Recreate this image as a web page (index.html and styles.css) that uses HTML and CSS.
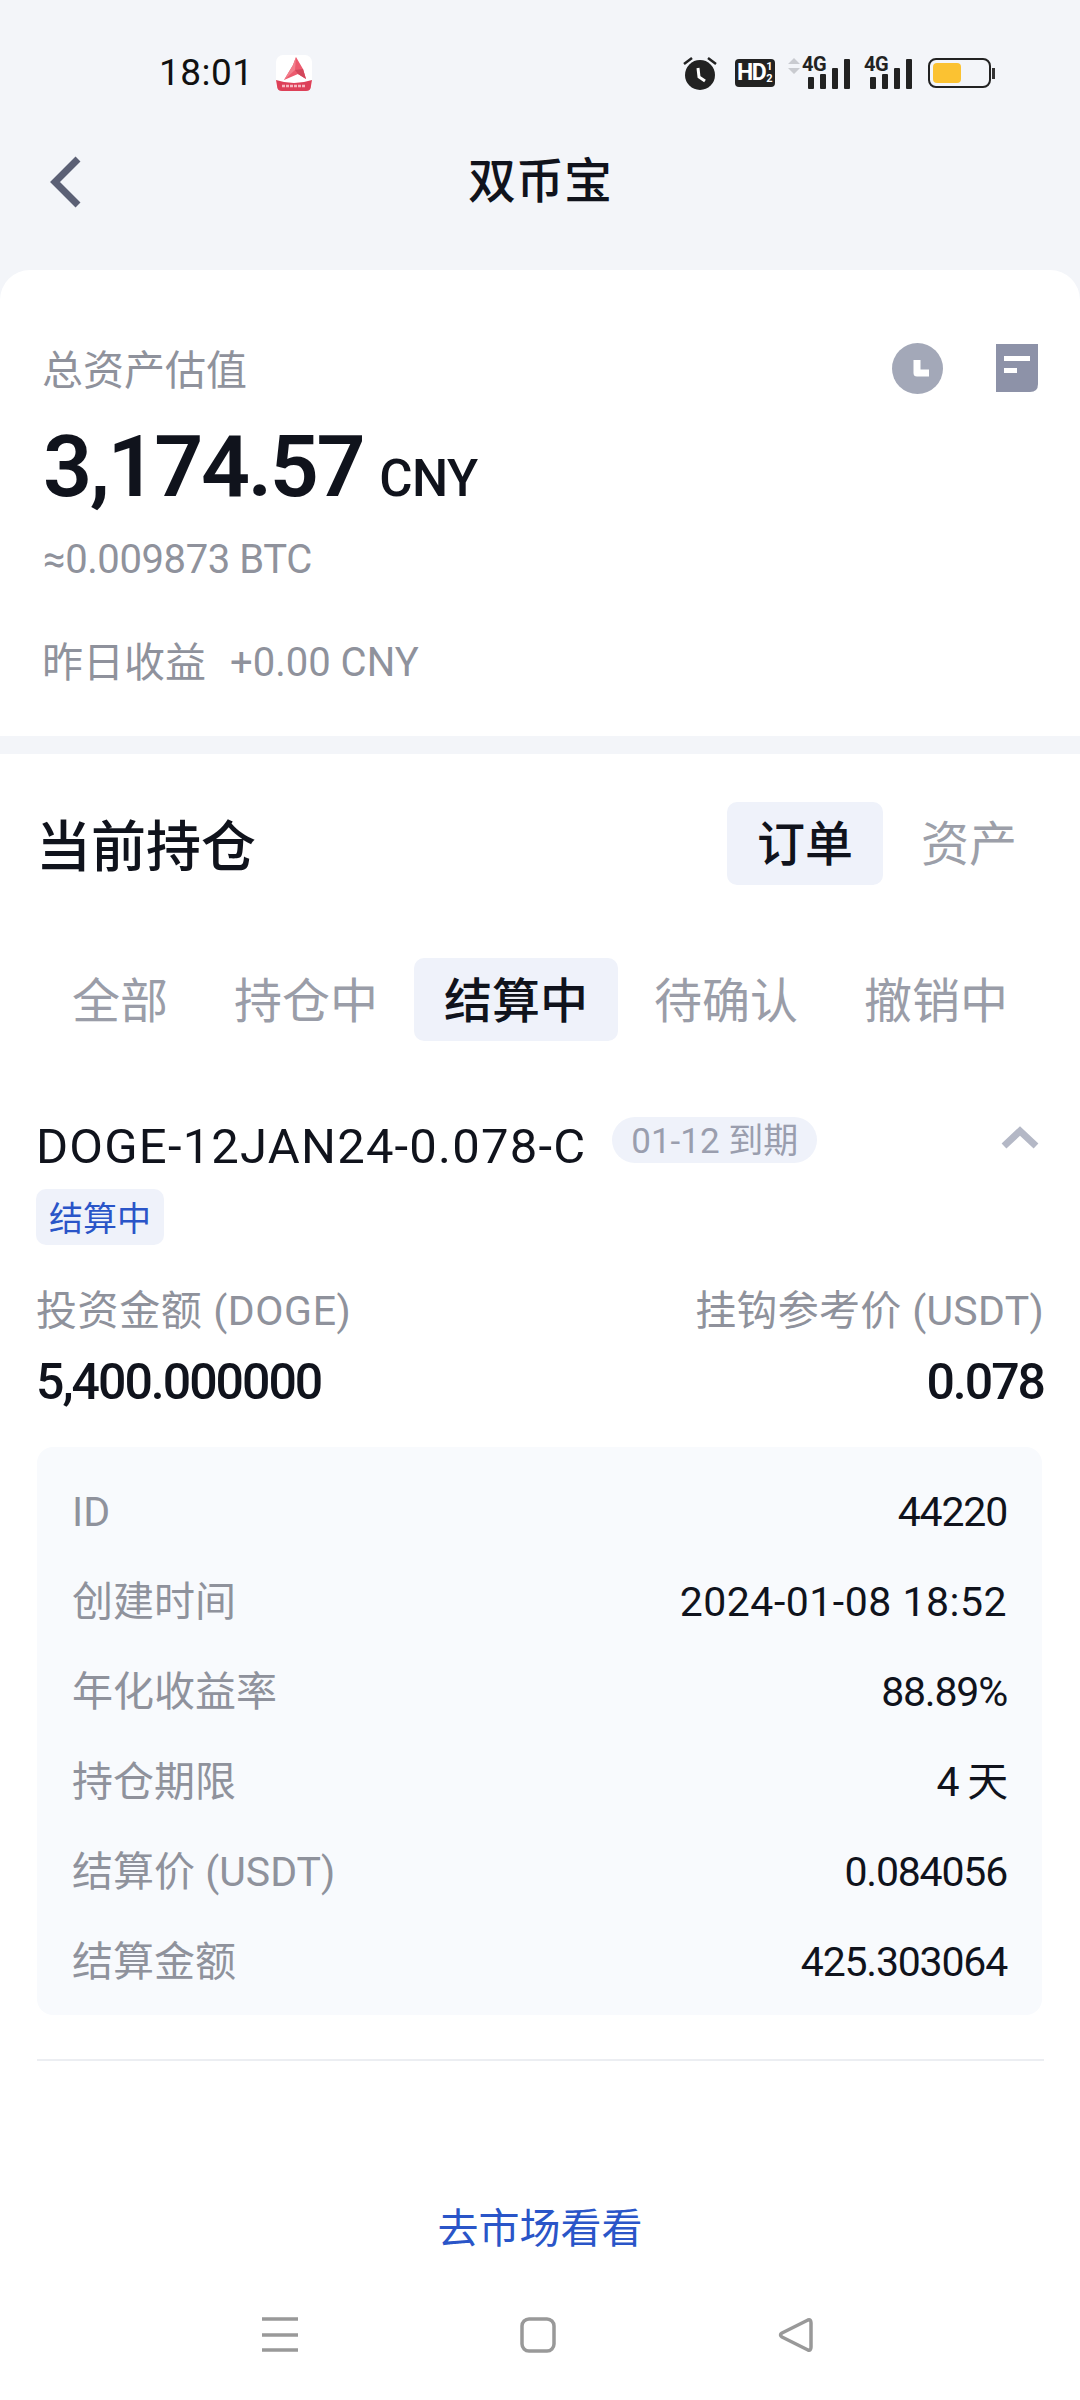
FILE: index.html
```html
<!DOCTYPE html>
<html lang="zh-CN">
<head>
<meta charset="utf-8">
<title>双币宝</title>
<link rel="stylesheet" href="styles.css">
</head>
<body>
<div class="page">
  <div class="statusbar">
    <span class="time">18:01</span>
    <svg class="app-icon" width="36" height="36" viewBox="0 0 36 36">
      <rect width="36" height="36" rx="7" fill="#fff"/>
      <path d="M20 2 L27 14 L30 24 L22 19 L8 25 L17 10 Z" fill="#ec5a6e"/>
      <path d="M20 2 L17 10 L8 25 L19 15 Z" fill="#f27f8c"/>
      <path d="M19 15 L27 14 L30 24 L22 19 Z" fill="#d2475b"/>
      <path d="M0 25 Q18 31 36 25 L35 31 Q35 36 30 36 L6 36 Q1 36 1 31 Z" fill="#dd4058"/>
      <path d="M6 31 H30" stroke="#f6b6bf" stroke-width="2.5" stroke-dasharray="3 1"/>
    </svg>
    <span class="status-right">
      <svg width="34" height="34" viewBox="0 0 34 34"><circle cx="17" cy="19" r="15" fill="#222"/><path d="M1 8 L9 2 M33 8 L25 2" stroke="#222" stroke-width="2.5"/><path d="M15 12 L16 21 L22 25" stroke="#fff" stroke-width="3" fill="none"/></svg>
      <span class="hd">HD<span class="hd-sub"><span>1</span><span>2</span></span></span>
      <span class="signal">
        <svg class="arrows" width="12" height="16" viewBox="0 0 12 16"><path d="M6 0 L12 6 L0 6 Z M6 16 L12 10 L0 10 Z" fill="#c9cbd0"/></svg>
        <span class="net">4G</span>
        <span class="bars"><i class="b1"></i><i class="b2"></i><i class="b3"></i><i class="b4"></i></span>
      </span>
      <span class="signal plain">
        <span class="net">4G</span>
        <span class="bars"><i class="b1"></i><i class="b2"></i><i class="b3"></i><i class="b4"></i></span>
      </span>
      <span class="battery"><span class="battery-fill"></span></span><span class="battery-nub"></span>
    </span>
  </div>

  <div class="navbar">
    <svg class="back" width="31" height="52" viewBox="0 0 31 52"><path d="M28 3 L5 26 L28 49" fill="none" stroke="#5b6075" stroke-width="7"/></svg>
    <div class="title">双币宝</div>
    <span></span>
  </div>

  <section class="summary">
    <div class="summary-head">
      <span class="muted head-label">总资产估值</span>
      <span class="summary-icons">
        <svg width="51" height="51" viewBox="0 0 51 51"><circle cx="25.5" cy="25.5" r="25.5" fill="#a3a8b8"/><path d="M25 17 V30 H37" fill="none" stroke="#fff" stroke-width="7" stroke-linejoin="round"/></svg>
        <svg width="42" height="48" viewBox="0 0 42 48"><path d="M0 0 H42 V40 Q42 48 34 48 H0 Z" fill="#8d92a8"/><rect x="8" y="12" width="26" height="5" fill="#fff"/><rect x="8" y="24" width="13" height="5" fill="#fff"/></svg>
      </span>
    </div>
    <div class="amount"><span class="amount-num">3,174.57</span><span class="amount-unit">CNY</span></div>
    <div class="muted approx">≈0.009873 BTC</div>
    <div class="muted yesterday"><span class="yesterday-label">昨日收益</span><span class="yesterday-value">+0.00 CNY</span></div>
  </section>

  <section class="holdings">
    <div class="holdings-head">
      <h2 class="holdings-title">当前持仓</h2>
      <div class="seg">
        <span class="seg-item active">订单</span>
        <span class="seg-item">资产</span>
      </div>
    </div>
    <div class="filters">
      <span class="filter">全部</span>
      <span class="filter">持仓中</span>
      <span class="filter active">结算中</span>
      <span class="filter">待确认</span>
      <span class="filter">撤销中</span>
    </div>

    <div class="order-head">
      <span class="order-name">DOGE-12JAN24-0.078-C</span>
      <span class="chip">01-12 到期</span>
      <svg class="chevron" width="38" height="23" viewBox="0 0 38 23"><path d="M3 20 L19 5 L35 20" fill="none" stroke="#b4b8c6" stroke-width="7"/></svg>
    </div>
    <span class="tag">结算中</span>

    <div class="figures">
      <div class="figure"><span class="muted">投资金额 (DOGE)</span><span class="figure-value">5,400.000000</span></div>
      <div class="figure right"><span class="muted">挂钩参考价 (USDT)</span><span class="figure-value">0.078</span></div>
    </div>

    <div class="details">
      <div class="row"><span class="muted">ID</span><span>44220</span></div>
      <div class="row"><span class="muted">创建时间</span><span class="date">2024-01-08 18:52</span></div>
      <div class="row"><span class="muted">年化收益率</span><span>88.89%</span></div>
      <div class="row"><span class="muted">持仓期限</span><span>4 天</span></div>
      <div class="row"><span class="muted">结算价 (USDT)</span><span>0.084056</span></div>
      <div class="row"><span class="muted">结算金额</span><span>425.303064</span></div>
    </div>
    <div class="divider"></div>
    <a class="market-link">去市场看看</a>
    <div class="sysnav">
      <svg width="36" height="36" viewBox="0 0 36 36"><path d="M0 2 H36 M0 18 H36 M0 33 H36" stroke="#999" stroke-width="3.5"/></svg>
      <svg width="36" height="36" viewBox="0 0 36 36"><rect x="2" y="2" width="32" height="32" rx="7" fill="none" stroke="#999" stroke-width="3.5"/></svg>
      <svg width="36" height="36" viewBox="0 0 36 36"><path d="M30 3 Q33 2 33 6 V30 Q33 34 30 33 L4 20 Q1 18 4 16 Z" fill="none" stroke="#999" stroke-width="3.5" stroke-linejoin="round"/></svg>
    </div>
  </section>
</div>
</body>
</html>
```

FILE: styles.css
```css
* { box-sizing: border-box; }
html, body { margin: 0; padding: 0; }
body {
  background: #f3f5f9;
  font-family: Roboto, "Noto Sans CJK SC", sans-serif;
  color: #10131c;
}
.page { width: 1080px; height: 2400px; overflow: hidden; display: flex; flex-direction: column; }

.statusbar { height: 146px; display: flex; align-items: center; padding-left: 159px; flex: none; }
.time { font-size: 37px; letter-spacing: 0.5px; color: #111; line-height: 40px; width: 117px; }
.app-icon { display: block; }
.status-right { margin-left: auto; margin-right: 85px; display: flex; align-items: center; }
.hd { margin-left: 18px; width: 40px; height: 28px; background: #222; color: #fff; border-radius: 4px; font: 700 23px/28px Roboto, sans-serif; display: flex; padding-left: 2px; letter-spacing: -1.5px; overflow: hidden; }
.hd-sub { display: flex; flex-direction: column; font-size: 11px; line-height: 12px; margin-left: 1px; padding-top: 2px; letter-spacing: 0; }
.signal { display: flex; position: relative; width: 62px; height: 32px; margin-left: 13px; align-items: flex-end; justify-content: flex-end; }
.signal.plain { margin-left: 16px; width: 46px; }
.arrows { position: absolute; left: 0; top: 1px; }
.net { position: absolute; left: 14px; top: -3px; font: 700 20px/20px Roboto, sans-serif; color: #222; letter-spacing: -0.5px; }
.signal.plain .net { left: -2px; }
.bars { display: flex; align-items: flex-end; gap: 6px; height: 30px; }
.bars i { display: block; width: 6px; background: #222; border-radius: 1px; }
.bars .b1 { height: 12px; }
.bars .b2 { height: 15px; }
.bars .b3 { height: 21px; }
.bars .b4 { height: 30px; }
.battery { margin-left: 16px; width: 63px; height: 30px; border: 2.5px solid #222; border-radius: 8px; padding: 3px; display: block; }
.battery-fill { display: block; width: 28px; height: 100%; background: #fbc232; border-radius: 4px; }
.battery-nub { margin-left: 1px; width: 3px; height: 11px; background: #333; }

.navbar { height: 72px; margin-bottom: 52px; flex: none; display: grid; grid-template-columns: 1fr auto 1fr; align-items: center; padding-left: 50px; padding-right: 50px; }
.back { display: block; }
.title { font-size: 48px; line-height: 72px; font-weight: 500; color: #10131c; }

.muted { color: #8f929c; }
.summary { flex: none; background: #fff; border-radius: 30px 30px 0 0; height: 466px; padding: 72px 43px 0 43px; font-size: 41px; }
.summary-head { display: flex; justify-content: space-between; align-items: center; height: 52px; line-height: 52px; }
.head-label { padding-top: 5px; margin-left: -1px; }
.summary-icons { display: flex; align-items: center; gap: 53px; margin-right: -1px; }
.summary-icons svg { display: block; }
.amount { margin-top: 23px; height: 100px; display: flex; align-items: baseline; line-height: 100px; }
.amount-num { font-size: 86px; font-weight: 600; letter-spacing: -2.4px; color: #10131c; margin-right: 3px; }
.amount-unit { font-size: 51px; font-weight: 500; margin-left: 13px; letter-spacing: -0.5px; }
.approx { margin-top: 18px; line-height: 50px; font-size: 40px; letter-spacing: -0.4px; }
.yesterday { margin-top: 52px; line-height: 52px; display: flex; gap: 24px; margin-left: -1px; }
.yesterday-value { font-size: 40px; letter-spacing: 0; }

.holdings { flex: none; margin-top: 18px; background: #fff; height: 1646px; display: flex; flex-direction: column; }
.holdings-head { margin-top: 48px; height: 83px; display: flex; justify-content: space-between; align-items: center; padding: 0 33px 0 36px; }
.holdings-title { margin: 0; font-size: 55px; font-weight: 500; line-height: 83px; padding-top: 7px; color: #10131c; }
.seg { display: flex; gap: 8px; }
.seg-item { padding: 2px 30px 0; font-size: 48px; line-height: 81px; height: 83px; color: #9c9fa9; border-radius: 10px; }
.seg-item.active { background: #eff2fa; color: #10131c; font-weight: 500; }
.filters { margin-top: 73px; height: 83px; display: flex; gap: 6px; padding-left: 42px; }
.filter { padding: 4px 30px 0; font-size: 48px; line-height: 79px; height: 83px; color: #9a9da8; border-radius: 10px; }
.filter.active { background: #eff2fa; color: #10131c; font-weight: 500; }

.order-head { margin-top: 76px; height: 60px; display: flex; align-items: flex-start; padding: 0 41px 0 36px; }
.order-name { font-size: 49px; line-height: 60px; letter-spacing: 1.2px; color: #10131c; }
.chip { margin-left: 26px; height: 46px; border-radius: 23px; background: #eff2fa; color: #9a9eae; font-size: 35px; line-height: 49px; padding: 0 19px; }
.chevron { margin-left: auto; margin-top: 9px; display: block; }
.tag { margin: 12px 0 0 36px; align-self: flex-start; height: 56px; line-height: 60px; padding: 0 13px; background: #eff2fa; border-radius: 10px; color: #2a55c8; font-size: 34px; }

.figures { margin-top: 40px; display: flex; justify-content: space-between; padding: 0 36px; font-size: 41px; }
.figure { display: flex; flex-direction: column; }
.figure .muted { line-height: 52px; letter-spacing: 0.6px; }
.figure.right .muted { letter-spacing: 0.3px; }
.figure.right { align-items: flex-end; }
.figure-value { margin-top: 15px; font-size: 50px; line-height: 60px; font-weight: 500; letter-spacing: -2px; color: #10131c; }

.details { margin: 35px 38px 0 37px; height: 568px; padding: 20px 35px 0 35px; background: #f8fafd; border-radius: 16px; font-size: 41px; letter-spacing: -1.2px; }
.row { height: 90px; display: flex; justify-content: space-between; align-items: center; color: #10131c; line-height: 50px; }
.row .muted { font-size: 41px; letter-spacing: 0; }
.date { letter-spacing: 0.5px; }
.divider { margin: 44px 36px 0 37px; height: 2px; background: #eceef2; flex: none; }
.market-link { margin-top: 136px; text-align: center; font-size: 41px; line-height: 64px; height: 60px; color: #2a55c8; }
.sysnav { margin-top: 60px; padding-right: 4px; display: flex; justify-content: center; gap: 222px; }
.sysnav svg { display: block; }
```
